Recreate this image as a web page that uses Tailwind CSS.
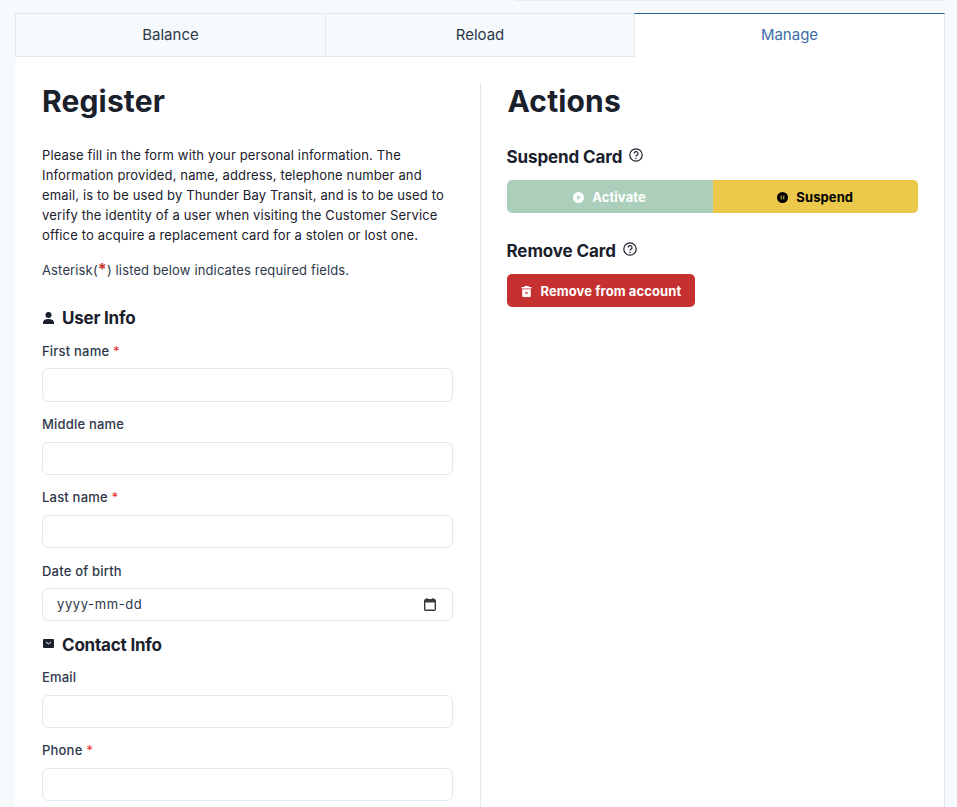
<!DOCTYPE html>
<html lang="en">
<head>
  <meta charset="UTF-8">
  <title>Manage Card</title>
  <script src="https://cdn.jsdelivr.net/npm/@tailwindcss/browser@4"></script>
</head>
<body class="bg-[#f6fafd] h-[807px] overflow-hidden font-['Inter',sans-serif] text-[#1a202c]">
  <!-- top bar edge -->
  <div class="h-px ml-[515px] mr-[14px] bg-[#e9edf2]"></div>

  <div class="ml-[15px] mt-[12px] w-[930px]">
    <!-- Tabs -->
    <div class="flex h-[44px] text-[15px]">
      <div class="w-[311px] flex items-center justify-center bg-[#f6fafd] border border-[#e2e8f0] text-[#2d3748]">Balance</div>
      <div class="w-[309px] flex items-center justify-center bg-[#f6fafd] border-y border-r border-[#e2e8f0] text-[#2d3748]">Reload</div>
      <div class="flex-1 -ml-px relative flex items-center justify-center bg-white border-t border-t-[#2c5f9a] border-l border-l-[#e2e8f0] border-r border-r-[#e2e8f0] text-[#3a6ea5]">Manage</div>
    </div>

    <div class="flex bg-white h-[750px] pt-[26px] border-r border-[#e2e8f0]">
      <!-- Register -->
      <div class="w-[466px] pl-[27px] pr-[27px] border-r border-[#e2e8f0]">
        <h1 class="text-[30px] font-bold leading-[36px] tracking-[0.15px] text-[#1a202c]">Register</h1>
        <p class="mt-[26px] text-[13px] leading-[20px] tracking-[0.14px] text-[#1a202c]">Please fill in the form with your personal information. The Information provided, name, address, telephone number and email, is to be used by Thunder Bay Transit, and is to be used to verify the identity of a user when visiting the Customer Service office to acquire a replacement card for a stolen or lost one.</p>
        <p class="mt-[15px] text-[13px] leading-[20px] tracking-[0.14px] text-[#2d3748]">Asterisk(<span class="text-[16px] leading-[16px] text-[#c53030] font-bold">*</span>) listed below indicates required fields.</p>

        <h2 class="mt-[26px] flex items-center gap-[9px] text-[17px] font-[650] tracking-[-0.2px] leading-[24px]">
          <svg class="w-[11px] h-[12px] -mt-px ml-px" viewBox="0 0 11 12" fill="#1a202c"><circle cx="5.5" cy="3" r="3"/><path d="M0 12v-1.6C0 8.3 2 7 5.5 7S11 8.3 11 10.4V12z"/></svg>
          <span class="-ml-px">User Info</span>
        </h2>
        <label class="block mt-[11px] text-[13px] leading-[20px] font-[450] tracking-[0.2px] text-[#2d3748]">First name <span class="text-[#e53e3e]">*</span></label>
        <input type="text" class="block mt-[7px] w-full h-[34px] rounded-[6px] border border-[#e2e8f0] bg-white">
        <label class="block mt-[12px] text-[13px] leading-[20px] font-[450] tracking-[0.2px] text-[#2d3748]">Middle name</label>
        <input type="text" class="block mt-[8px] w-full h-[33px] rounded-[6px] border border-[#e2e8f0] bg-white">
        <label class="block mt-[12px] text-[13px] leading-[20px] font-[450] tracking-[0.2px] text-[#2d3748]">Last name <span class="text-[#e53e3e]">*</span></label>
        <input type="text" class="block mt-[8px] w-full h-[33px] rounded-[6px] border border-[#e2e8f0] bg-white">
        <label class="block mt-[13px] text-[13px] leading-[20px] font-[450] tracking-[0.2px] text-[#2d3748]">Date of birth</label>
        <div class="mt-[7px] w-full h-[33px] rounded-[6px] border border-[#e2e8f0] bg-white flex items-center justify-between pl-[14px] pr-[16px] text-[13px] tracking-[0.6px] text-[#2d3748]">
          <span>yyyy-mm-dd</span>
          <svg class="w-[12px] h-[13px]" viewBox="0 0 12 13" fill="none"><path d="M3 0v2M9 0v2" stroke="#3a3a3a" stroke-width="1.4"/><rect x="0.7" y="1.7" width="10.6" height="10.6" rx="1" stroke="#3a3a3a" stroke-width="1.4"/><rect x="0.7" y="1.7" width="10.6" height="2.8" fill="#3a3a3a"/></svg>
        </div>

        <h2 class="mt-[12px] flex items-center gap-[8px] text-[17px] font-[650] tracking-[-0.2px] leading-[24px]">
          <svg class="w-[11px] h-[9px] ml-px -mt-[3px]" viewBox="0 0 11 9"><rect width="11" height="9" rx="1" fill="#1a202c"/><path d="M3 3l2.5 2L8 3" fill="none" stroke="#fff" stroke-width="1"/></svg>
          Contact Info
        </h2>
        <label class="block mt-[10px] text-[13px] leading-[20px] font-[450] tracking-[0.2px] text-[#2d3748]">Email</label>
        <input type="email" class="block mt-[8px] w-full h-[33px] rounded-[6px] border border-[#e2e8f0] bg-white">
        <label class="block mt-[12px] text-[13px] leading-[20px] font-[450] tracking-[0.2px] text-[#2d3748]">Phone <span class="text-[#e53e3e]">*</span></label>
        <input type="tel" class="block mt-[8px] w-full h-[33px] rounded-[6px] border border-[#e2e8f0] bg-white">
      </div>

      <!-- Actions -->
      <div class="w-[464px] pl-[26px] pr-[26px]">
        <h1 class="text-[30px] font-bold leading-[36px] tracking-[0.15px] pl-px text-[#1a202c]">Actions</h1>

        <h2 class="mt-[26px] flex items-start gap-[7px] text-[17px] font-[650] tracking-[-0.1px] leading-[24px]">
          Suspend Card
          <svg class="w-[14px] h-[14px] mt-[3px]" viewBox="0 0 14 14" fill="none" stroke="#1a202c"><circle cx="7" cy="7" r="6.2" stroke-width="1.2"/><path d="M5.2 5.4a1.9 1.9 0 1 1 2.8 1.7c-.7.4-1 .7-1 1.5" stroke-width="1.2"/><circle cx="7" cy="10.3" r=".4" stroke-width=".8"/></svg>
        </h2>
        <div class="mt-[11px] flex h-[33px] rounded-[5px] overflow-hidden text-[13px] font-[650] tracking-[0.1px]">
          <div class="w-[206px] flex items-center justify-center gap-[8px] pt-[2px] bg-[#abcfbb] text-white">
            <svg class="w-[11px] h-[11px] -mt-px" viewBox="0 0 11 11"><circle cx="5.5" cy="5.5" r="5.5" fill="#fff"/><path d="M4.2 3.2v4.6l3.6-2.3z" fill="#abcfbb"/></svg>
            Activate
          </div>
          <div class="flex-1 flex items-center justify-center gap-[8px] pt-[2px] bg-[#ecc94b] text-black">
            <svg class="w-[11px] h-[11px] -mt-px" viewBox="0 0 11 11"><circle cx="5.5" cy="5.5" r="5.5" fill="#000"/><path d="M4.2 3.6v3.8M6.8 3.6v3.8" stroke="#ecc94b" stroke-width="1"/></svg>
            Suspend
          </div>
        </div>

        <h2 class="mt-[26px] flex items-start gap-[7px] text-[17px] font-[650] tracking-[-0.1px] leading-[24px]">
          Remove Card
          <svg class="w-[14px] h-[14px] mt-[3px]" viewBox="0 0 14 14" fill="none" stroke="#1a202c"><circle cx="7" cy="7" r="6.2" stroke-width="1.2"/><path d="M5.2 5.4a1.9 1.9 0 1 1 2.8 1.7c-.7.4-1 .7-1 1.5" stroke-width="1.2"/><circle cx="7" cy="10.3" r=".4" stroke-width=".8"/></svg>
        </h2>
        <button class="mt-[11px] flex items-center gap-[9px] h-[33px] w-[188px] pl-[14px] pt-[2px] rounded-[5px] bg-[#c53030] text-white text-[13px] font-[650] tracking-[0.1px]">
          <svg class="w-[11px] h-[11px] -mt-px" viewBox="0 0 11 11"><path d="M3.5 0h4l.5 1H10.5v1.4H.5V1h2.5z" fill="#fff"/><path d="M1.2 3.2h8.6V10a1 1 0 0 1-1 1H2.2a1 1 0 0 1-1-1z" fill="#fff"/><path d="M4.4 5.8l2.2 2.2M6.6 5.8L4.4 8" stroke="#c53030" stroke-width="1"/></svg>
          Remove from account
        </button>
      </div>
    </div>
  </div>
</body>
</html>
